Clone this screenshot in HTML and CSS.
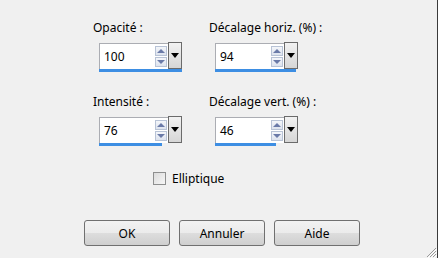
FILE: index.html
```html
<!DOCTYPE html>
<html lang="fr">
<head>
    <meta charset="UTF-8">
    <title>Ombre portée</title>
    <link rel="stylesheet" href="styles.css">
</head>
<body>
    <div class="dialog">
        <div class="fields">
            <div class="field">
                <label>Opacité :</label>
                <div class="spin">
                    <div class="box">
                        <span class="value">100</span>
                        <div class="arrows"><span class="up"></span><span class="down"></span></div>
                    </div>
                    <span class="drop"></span>
                    <div class="bar"><div class="fill" style="width: 100%"></div></div>
                </div>
            </div>
            <div class="field">
                <label>Décalage horiz. (%) :</label>
                <div class="spin">
                    <div class="box">
                        <span class="value">94</span>
                        <div class="arrows"><span class="up"></span><span class="down"></span></div>
                    </div>
                    <span class="drop"></span>
                    <div class="bar"><div class="fill" style="width: 97%"></div></div>
                </div>
            </div>
            <div class="field">
                <label>Intensité :</label>
                <div class="spin">
                    <div class="box">
                        <span class="value">76</span>
                        <div class="arrows"><span class="up"></span><span class="down"></span></div>
                    </div>
                    <span class="drop"></span>
                    <div class="bar"><div class="fill" style="width: 76%"></div></div>
                </div>
            </div>
            <div class="field">
                <label>Décalage vert. (%) :</label>
                <div class="spin">
                    <div class="box">
                        <span class="value">46</span>
                        <div class="arrows"><span class="up"></span><span class="down"></span></div>
                    </div>
                    <span class="drop"></span>
                    <div class="bar"><div class="fill" style="width: 73%"></div></div>
                </div>
            </div>
        </div>

        <div class="check-row">
            <span class="checkbox"></span>
            <span>Elliptique</span>
        </div>

        <div class="buttons">
            <button>OK</button>
            <button>Annuler</button>
            <button>Aide</button>
        </div>

        <svg class="grip" width="12" height="12" viewBox="0 0 12 12">
            <path d="M11 2 L2 11 M11 5 L5 11 M11 8 L8 11" stroke="#9a9a9a" stroke-width="1"/>
            <path d="M12 3 L3 12 M12 6 L6 12 M12 9 L9 12" stroke="#ffffff" stroke-width="1"/>
        </svg>
    </div>
</body>
</html>
```

FILE: styles.css
```css
body {
    margin: 0;
    padding: 0;
    background-color: #f0f0f0;
    font-family: "Noto Sans", "Open Sans", sans-serif;
    font-size: 12px;
    color: #000;
}

.dialog {
    position: relative;
    width: 437px;
    height: 258px;
    border-right: 1px solid #3a3a3a;
    box-sizing: content-box;
}

.fields {
    display: grid;
    grid-template-columns: 116px 120px;
    row-gap: 21px;
    padding: 19px 0 0 93px;
}

.field label {
    display: block;
    height: 17px;
    line-height: 17px;
    margin-bottom: 7px;
}

.spin {
    margin-left: 6px;
    width: 83px;
    display: flex;
    flex-wrap: wrap;
}

.box {
    width: 69px;
    height: 26px;
    background: #fff;
    border: 1px solid #abadb3;
    border-right: none;
    border-bottom: none;
    display: flex;
    align-items: center;
    justify-content: space-between;
    box-sizing: border-box;
    padding-left: 4px;
}

.value {
    font-size: 12px;
}

.arrows {
    display: flex;
    flex-direction: column;
    gap: 1px;
    margin-right: 1px;
}

.arrows span {
    position: relative;
    width: 10px;
    height: 8px;
    border: 1px solid #b8c3d6;
    background: linear-gradient(#f4f6fa, #dde3ee);
}

.arrows span::after {
    content: "";
    position: absolute;
    left: 1px;
    border-left: 4px solid transparent;
    border-right: 4px solid transparent;
}

.arrows .up::after {
    top: 2px;
    border-bottom: 4px solid #6a7aa8;
}

.arrows .down::after {
    top: 2px;
    border-top: 4px solid #6a7aa8;
}

.drop {
    position: relative;
    width: 14px;
    height: 27px;
    box-sizing: border-box;
    border: 1px solid #6b6b6b;
    background: linear-gradient(#f2f2f2, #d6d6d6);
    margin-top: -1px;
}

.drop::after {
    content: "";
    position: absolute;
    left: 2px;
    top: 10px;
    border-left: 4px solid transparent;
    border-right: 4px solid transparent;
    border-top: 5px solid #000;
}

.bar {
    width: 83px;
    height: 3px;
    background: #f0f0f0;
}

.fill {
    height: 3px;
    background: #3d8ee3;
}

.check-row {
    display: flex;
    align-items: center;
    gap: 6px;
    padding-left: 153px;
    margin-top: 24px;
}

.checkbox {
    width: 11px;
    height: 11px;
    border: 1px solid #8e8f8f;
    background: linear-gradient(135deg, #dcdcdc, #f6f6f6);
}

.buttons {
    display: flex;
    gap: 9px;
    padding-left: 84px;
    margin-top: 33px;
}

button {
    width: 86px;
    height: 26px;
    font-family: "Noto Sans", "Open Sans", sans-serif;
    font-size: 12px;
    color: #000;
    border: 1px solid #707070;
    border-radius: 3px;
    background: linear-gradient(#f2f2f2 0%, #ebebeb 50%, #dddddd 51%, #cfcfcf 100%);
    padding: 0;
}

.grip {
    position: absolute;
    right: 0;
    bottom: 0;
}
```
